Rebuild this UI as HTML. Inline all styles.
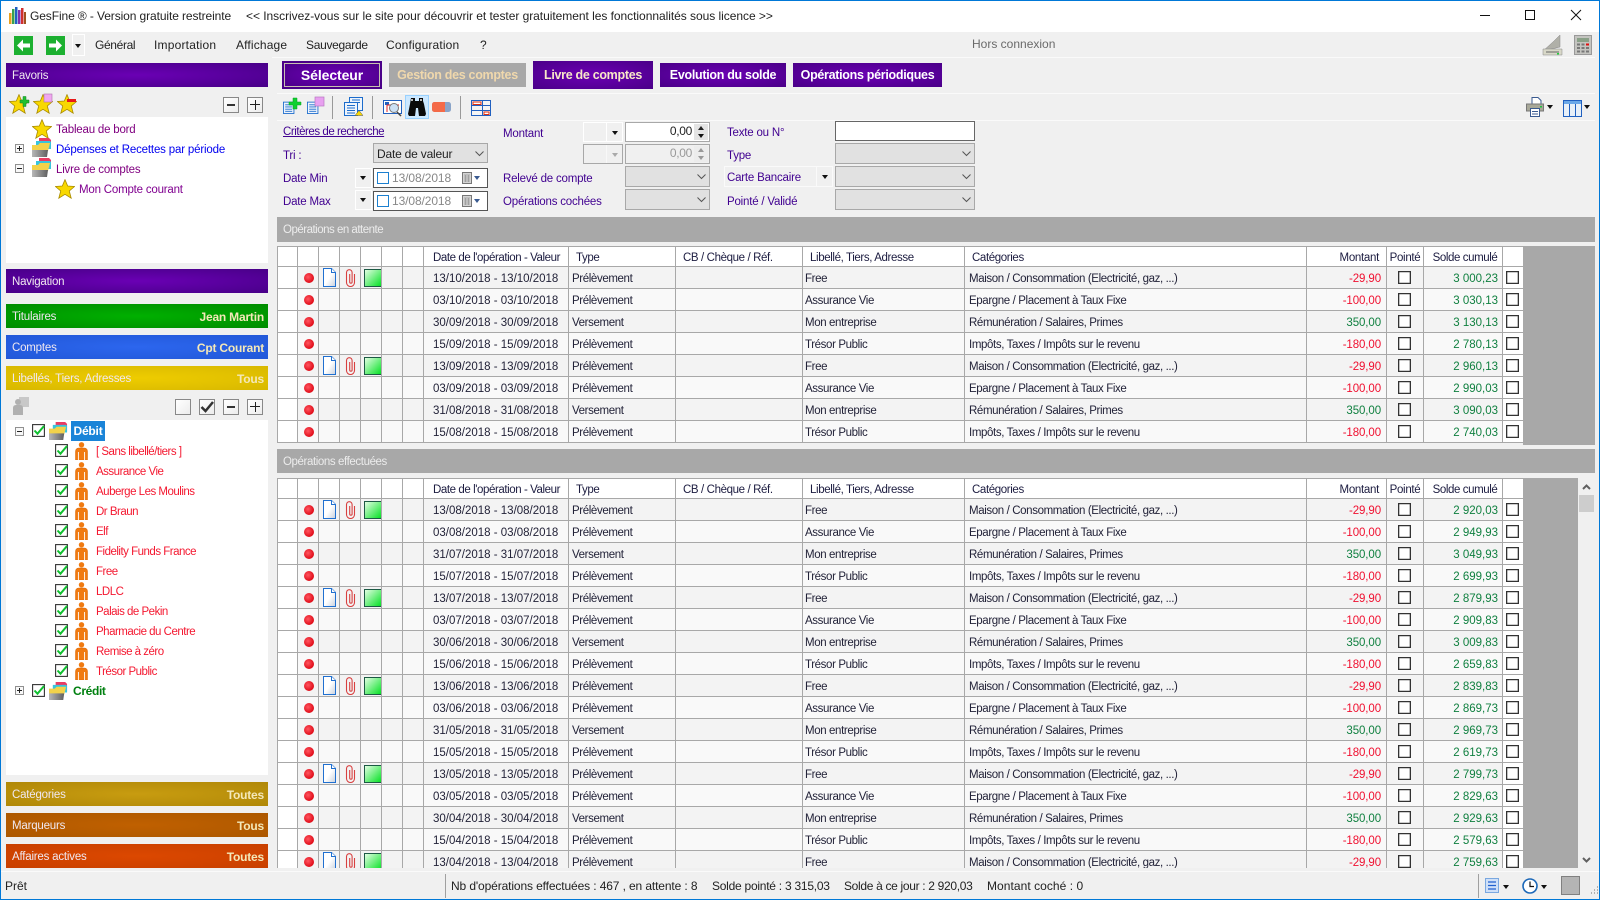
<!DOCTYPE html>
<html lang="fr"><head><meta charset="utf-8"><title>GesFine</title>
<style>
*{box-sizing:border-box}
html,body{margin:0;padding:0}
body{width:1600px;height:900px;overflow:hidden;background:#f0f0f0;font:12px "Liberation Sans",sans-serif;color:#222;position:relative}
.a{position:absolute}
.t{position:absolute;line-height:16px;white-space:nowrap}
svg{display:block;overflow:visible}
.p{color:#400090;font-size:11.5px;letter-spacing:-.2px;margin-top:1px}
.bar{position:absolute;left:6px;width:262px;height:24px;line-height:26px;padding:0 4px 0 6px;color:#f0e8f0;font-size:11.5px;letter-spacing:-.2px;display:flex;justify-content:space-between;overflow:hidden}
.bar b{color:#f4e8b8;font-size:12px;letter-spacing:-.2px}
.btn{position:absolute;color:#fff;font-weight:bold;text-align:center;background:radial-gradient(ellipse at center,#6c00b4,#4a0088);font-size:12.5px;letter-spacing:-.3px;height:24px;line-height:24px;top:63px}
.sel{position:absolute;background:#e1e1e1;border:1px solid #a8a8a8;height:21px}
.chev{position:absolute;right:3px;top:7px}
.dd{position:absolute;background:#f0f0f0;border:1px solid #fff;height:20px}
.tri{position:absolute;width:0;height:0;border-left:3.5px solid transparent;border-right:3.5px solid transparent;border-top:4px solid #111}
.inp{position:absolute;background:#fff;border:1px solid #666}
.mini{position:absolute;width:16px;height:16px;background:linear-gradient(135deg,#fff,#ececec);border:1px solid #888}
.ex{position:absolute;width:9px;height:9px;border:1px solid #909090;background:#f8f8f8}
.ex:before{content:"";position:absolute;left:1px;top:3px;width:5px;height:1px;background:#222}
.ex.pl:after{content:"";position:absolute;left:3px;top:1px;width:1px;height:5px;background:#222}
.tree{position:absolute;left:6px;width:262px;background:#fff}
.lt{position:absolute;line-height:16px;white-space:nowrap;font-size:11.5px;letter-spacing:-.2px}
.rd{color:#f41830;letter-spacing:-.5px}
table{border-collapse:collapse;table-layout:fixed;width:1246px;font-size:11.5px;letter-spacing:-.38px;color:#222238}
td{border:1px solid #a8a8a8;padding:2px 0 0 4px;height:22px;white-space:nowrap;overflow:hidden}
td:nth-child(9){padding-left:3px}
td:nth-child(11){padding-left:2px}
tr.h td{height:20px;background:#fff;padding-left:7px;color:#1c1c40}
tr.o td{background:#f3f3f3}
tr.e td{background:#f9f9f9}
tr td:first-child,tr td:last-child{background:#fff!important}
td.n{padding:0}
td.dt{padding-left:9px;letter-spacing:0}
tr.h td.dt{padding-left:9px;letter-spacing:-.42px}
td.r{text-align:right;padding:2px 5px 0 0;letter-spacing:-.1px}
tr.h td.r{padding-right:7px;letter-spacing:-.3px}
td.m{color:#f01030}
td.g{color:#108040}
td.s{text-align:right;padding:2px 4px 0 0;color:#108040;letter-spacing:0}
td.hc{text-align:center;padding:2px 0 0!important;letter-spacing:-.3px}
tr.h td:nth-child(15){padding-left:4px!important;letter-spacing:-.42px}
i.d{display:block;width:10px;height:10px;border-radius:50%;margin:1px 0 0 6px;background:radial-gradient(circle at 40% 40%,#ff5560,#e00c18 70%)}
b.c{display:block;width:13px;height:13px;border:1px solid #333;background:#fff;margin:auto;position:relative;left:-1px;box-shadow:inset 0 0 0 .3px #333}
.gray{position:absolute;background:#a8a8a8}
.sl{position:absolute;top:872px;font-size:12px;line-height:16px;white-space:nowrap;color:#222}
</style></head>
<body>
<svg width="0" height="0" style="position:absolute">
<defs>
<linearGradient id="gg" x1="0" y1="0" x2="1" y2="1"><stop offset="0" stop-color="#e8ffe8"/><stop offset="1" stop-color="#00e020"/></linearGradient>
<linearGradient id="dg" x1="0" y1="0" x2="1" y2="1"><stop offset=".5" stop-color="#fff"/><stop offset="1" stop-color="#c8d0dc"/></linearGradient>
<linearGradient id="fg" x1="0" y1="0" x2="1" y2="0"><stop offset="0" stop-color="#b8b8b8"/><stop offset="1" stop-color="#606060"/></linearGradient>
<symbol id="star" viewBox="0 0 20 20"><polygon points="10,.6 12.7,7 19.6,7.5 14.3,12 16.2,19.2 10,15.3 3.8,19.2 5.7,12 .4,7.5 7.3,7" fill="#f8d800" stroke="#a88a00" stroke-width=".8"/></symbol>
<symbol id="fold" viewBox="0 0 20 20"><path d="M7 0h10l2 2v8H7z" fill="#e83c62"/><path d="M4 3h14l1 1v7H4z" fill="#38c4dc"/><path d="M0 7h6l2-2h10l-2 8H0z" fill="#f2d24a"/><path d="M0 12h16l-1 7H0z" fill="url(#fg)"/></symbol>
<symbol id="pers" viewBox="0 0 13 18"><circle cx="6.500" cy="2.800" r="2.700" fill="#f07a10"/><path d="M.5 18V9.500Q.5 6 4 6h5q3.500 0 3.500 3.500V18z" fill="#f07a10" stroke="#d86400" stroke-width=".5"/><path d="M3.400 10v8M9.600 10v8" stroke="#fff" stroke-width=".9"/></symbol>
<symbol id="chk" viewBox="0 0 13 13"><rect x=".6" y=".6" width="11.800" height="11.800" fill="#fff" stroke="#333" stroke-width="1.100"/><path d="M2.500 6.500l3 3.200 6.500-7.700" fill="none" stroke="#10c030" stroke-width="2"/></symbol>
<symbol id="doc" viewBox="0 0 13 19"><path d="M.5.500h8l4 4v14H.5z" fill="url(#dg)" stroke="#2070d0"/><path d="M8.500.500v4h4" fill="#fff" stroke="#2070d0"/></symbol>
<symbol id="clip" viewBox="0 0 11 18"><path d="M9.500 5v8.500a4 4 0 0 1-8 0V3.500a2.800 2.800 0 0 1 5.600 0v9.500a1.200 1.200 0 0 1-2.400 0V5" fill="none" stroke="#d84040" stroke-width="1.100"/></symbol>
<symbol id="gr" viewBox="0 0 18 18"><rect x=".5" y=".5" width="17" height="17" fill="url(#gg)" stroke="#1c5a44"/></symbol>
<symbol id="chv" viewBox="0 0 9 6"><path d="M.5.500l4 4 4-4" fill="none" stroke="#555" stroke-width="1"/></symbol>
<symbol id="tdoc" viewBox="0 0 16 17"><rect x=".5" y="3.500" width="12" height="13" fill="#eef4fc" stroke="#1c6ccc"/><path d="M2.500 6.500h8M2.500 9h8M2.500 11.500h8M2.500 14h8" stroke="#1c6ccc"/></symbol>
<symbol id="cal" viewBox="0 0 11 12"><rect x=".5" y=".5" width="9" height="11" fill="#d4d4d4" stroke="#777"/><path d="M2 3h6M2 5h6M2 7h6M2 9h6M3.500 3v7M6.500 3v7" stroke="#999" stroke-width=".8"/></symbol>
</defs></svg>

<!-- window frame -->
<div class="a" style="left:0;top:0;width:1600px;height:32px;background:#fff"></div>
<svg class="a" style="left:9px;top:7px" width="17" height="17"><rect x="0" y="6" width="2.500" height="11" fill="#e9a020"/><rect x="3" y="2" width="2.500" height="15" fill="#38a050"/><rect x="6" y="0" width="2.500" height="17" fill="#2060c0"/><rect x="9" y="3" width="2.500" height="14" fill="#8030b0"/><rect x="12" y="1" width="2.500" height="16" fill="#d03030"/><rect x="15" y="5" width="2" height="12" fill="#a05020"/></svg>
<div class="t" style="left:30px;top:8px;font-size:12px;letter-spacing:-.1px">GesFine ® - Version gratuite restreinte</div>
<div class="t" style="left:246px;top:8px;font-size:12px;letter-spacing:-.04px">&lt;&lt; Inscrivez-vous sur le site pour découvrir et tester gratuitement les fonctionnalités sous licence &gt;&gt;</div>
<svg class="a" style="left:1475px;top:8px" width="115" height="16"><path d="M5 7.500h10" stroke="#111"/><rect x="50.500" y="2.500" width="9" height="9" fill="none" stroke="#111"/><path d="M96 2l10 10M106 2L96 12" stroke="#111"/></svg>

<!-- menu -->
<svg class="a" style="left:14px;top:36px" width="19" height="19"><rect width="19" height="19" fill="#1cb030"/><path d="M3 9.500l6-6v4h7v4H9v4z" fill="#fff"/></svg>
<svg class="a" style="left:46px;top:36px" width="19" height="19"><rect width="19" height="19" fill="#1cb030"/><path d="M16 9.500l-6-6v4H3v4h7v4z" fill="#fff"/></svg>
<div class="a" style="left:72px;top:34px;width:13px;height:22px;border:1px solid #fff"></div>
<div class="tri" style="left:75px;top:44px"></div>
<div class="t" style="left:95px;top:37px;letter-spacing:-.35px">Général</div>
<div class="t" style="left:154px;top:37px;letter-spacing:.2px">Importation</div>
<div class="t" style="left:236px;top:37px;letter-spacing:.15px">Affichage</div>
<div class="t" style="left:306px;top:37px;letter-spacing:-.3px">Sauvegarde</div>
<div class="t" style="left:386px;top:37px;letter-spacing:.15px">Configuration</div>
<div class="t" style="left:480px;top:37px">?</div>
<div class="t" style="left:972px;top:36px;color:#6a6a6a">Hors connexion</div>
<svg class="a" style="left:1542px;top:35px" width="20" height="20"><path d="M1 16L12 6l6-6v12z" fill="#b0b0a8" stroke="#888" stroke-width=".5"/><path d="M1 14h19v6H1z" fill="#d8d8c8" stroke="#888" stroke-width=".5"/><path d="M4 17h13" stroke="#666"/><rect x="15" y="18" width="2" height="1.500" fill="#20d040"/></svg>
<svg class="a" style="left:1574px;top:35px" width="18" height="20"><rect x=".5" y=".5" width="17" height="19" fill="#c4c4c0" stroke="#999"/><rect x="3" y="3" width="12" height="4" fill="#8aa088"/><path d="M3 9.500h3M7.500 9.500h3M3 13h3M7.500 13h3M12 13h3M3 16.500h3M7.500 16.500h3M12 16.500h3" stroke="#777" stroke-width="2"/><path d="M12 9.500h3" stroke="#e01010" stroke-width="2"/></svg>
<div class="a" style="left:272px;top:57px;width:1323px;height:1px;background:#fafafa"></div>

<!-- left panel -->
<div class="bar" style="top:63px;background:radial-gradient(ellipse at center,#6a00b4,#480088)">Favoris</div>
<svg class="a" style="left:9px;top:94px" width="20" height="20"><use href="#star"/><path d="M11 6h3V2.500h3V6h3v3h-3v3.500h-3V9h-3z" fill="#20c030" stroke="#108020" stroke-width=".5"/></svg>
<svg class="a" style="left:33px;top:94px" width="20" height="20"><use href="#star"/><rect x="11" y="0" width="8" height="8" fill="#f0a8f0" stroke="#b070b0" stroke-width=".6"/></svg>
<svg class="a" style="left:57px;top:94px" width="20" height="20"><use href="#star"/><path d="M10 5h9v3h-9z" fill="#e81818"/></svg>
<div class="mini" style="left:223px;top:97px"><div class="a" style="left:3px;top:6px;width:8px;height:2px;background:#333"></div></div>
<div class="mini" style="left:247px;top:97px"><div class="a" style="left:2px;top:6px;width:10px;height:1px;background:#222"></div><div class="a" style="left:6.500px;top:2px;width:1px;height:10px;background:#222"></div></div>
<div class="tree" style="top:117px;height:146px"></div>
<svg class="a" style="left:32px;top:119px" width="20" height="20"><use href="#star"/></svg>
<div class="lt" style="left:56px;top:122px;color:#800080">Tableau de bord</div>
<div class="ex pl" style="left:15px;top:144px"></div>
<svg class="a" style="left:32px;top:138px" width="20" height="20"><use href="#fold"/></svg>
<div class="lt" style="left:56px;top:142px;color:#0000f0;letter-spacing:-.17px">Dépenses et Recettes par période</div>
<div class="ex" style="left:15px;top:164px"></div>
<svg class="a" style="left:32px;top:158px" width="20" height="20"><use href="#fold"/></svg>
<div class="lt" style="left:56px;top:162px;color:#800080">Livre de comptes</div>
<svg class="a" style="left:55px;top:179px" width="20" height="20"><use href="#star"/></svg>
<div class="lt" style="left:79px;top:182px;color:#800090">Mon Compte courant</div>

<div class="bar" style="top:269px;background:radial-gradient(ellipse at center,#6a00b4,#480088)">Navigation</div>
<div class="bar" style="top:304px;background:radial-gradient(ellipse at center,#00b000,#008c00)">Titulaires<b>Jean Martin</b></div>
<div class="bar" style="top:335px;background:radial-gradient(ellipse at center,#2c66ee,#2258d8)">Comptes<b>Cpt Courant</b></div>
<div class="bar" style="top:366px;background:radial-gradient(ellipse at center,#eecc00,#d8b800)">Libellés, Tiers, Adresses<b>Tous</b></div>

<svg class="a" style="left:12px;top:397px" width="17" height="18"><rect x="7" y="0" width="10" height="10" fill="#c8c8c8"/><circle cx="6" cy="5" r="3" fill="#b0b0b0"/><path d="M1 18V11q0-3 3-3h4q3 0 3 3v7z" fill="#b0b0b0"/></svg>
<div class="mini" style="left:175px;top:399px"></div>
<div class="mini" style="left:199px;top:399px"><svg class="a" style="left:0;top:0" width="14" height="14"><path d="M1.500 7l4 4L13 2" fill="none" stroke="#333" stroke-width="2.500"/></svg></div>
<div class="mini" style="left:223px;top:399px"><div class="a" style="left:3px;top:6px;width:8px;height:2px;background:#333"></div></div>
<div class="mini" style="left:247px;top:399px"><div class="a" style="left:2px;top:6px;width:10px;height:1px;background:#222"></div><div class="a" style="left:6.500px;top:2px;width:1px;height:10px;background:#222"></div></div>

<div class="tree" style="top:420px;height:355px"></div>
<div class="ex" style="left:15px;top:427px"></div>
<svg class="a" style="left:32px;top:424px" width="13" height="13"><use href="#chk"/></svg>
<svg class="a" style="left:49px;top:422px" width="19" height="19"><use href="#fold"/></svg>
<div class="a" style="left:71px;top:421px;width:34px;height:20px;background:#1a84d8;color:#fff;font-weight:bold;font-size:12px;line-height:20px;text-align:center;letter-spacing:-.2px">Débit</div>

<svg class="a" style="left:55px;top:444px" width="13" height="13"><use href="#chk"/></svg><svg class="a" style="left:75px;top:442px" width="13" height="18"><use href="#pers"/></svg><div class="lt rd" style="left:96px;top:444px">[ Sans libellé/tiers ]</div>
<svg class="a" style="left:55px;top:464px" width="13" height="13"><use href="#chk"/></svg><svg class="a" style="left:75px;top:462px" width="13" height="18"><use href="#pers"/></svg><div class="lt rd" style="left:96px;top:464px">Assurance Vie</div>
<svg class="a" style="left:55px;top:484px" width="13" height="13"><use href="#chk"/></svg><svg class="a" style="left:75px;top:482px" width="13" height="18"><use href="#pers"/></svg><div class="lt rd" style="left:96px;top:484px">Auberge Les Moulins</div>
<svg class="a" style="left:55px;top:504px" width="13" height="13"><use href="#chk"/></svg><svg class="a" style="left:75px;top:502px" width="13" height="18"><use href="#pers"/></svg><div class="lt rd" style="left:96px;top:504px">Dr Braun</div>
<svg class="a" style="left:55px;top:524px" width="13" height="13"><use href="#chk"/></svg><svg class="a" style="left:75px;top:522px" width="13" height="18"><use href="#pers"/></svg><div class="lt rd" style="left:96px;top:524px">Elf</div>
<svg class="a" style="left:55px;top:544px" width="13" height="13"><use href="#chk"/></svg><svg class="a" style="left:75px;top:542px" width="13" height="18"><use href="#pers"/></svg><div class="lt rd" style="left:96px;top:544px">Fidelity Funds France</div>
<svg class="a" style="left:55px;top:564px" width="13" height="13"><use href="#chk"/></svg><svg class="a" style="left:75px;top:562px" width="13" height="18"><use href="#pers"/></svg><div class="lt rd" style="left:96px;top:564px">Free</div>
<svg class="a" style="left:55px;top:584px" width="13" height="13"><use href="#chk"/></svg><svg class="a" style="left:75px;top:582px" width="13" height="18"><use href="#pers"/></svg><div class="lt rd" style="left:96px;top:584px">LDLC</div>
<svg class="a" style="left:55px;top:604px" width="13" height="13"><use href="#chk"/></svg><svg class="a" style="left:75px;top:602px" width="13" height="18"><use href="#pers"/></svg><div class="lt rd" style="left:96px;top:604px">Palais de Pekin</div>
<svg class="a" style="left:55px;top:624px" width="13" height="13"><use href="#chk"/></svg><svg class="a" style="left:75px;top:622px" width="13" height="18"><use href="#pers"/></svg><div class="lt rd" style="left:96px;top:624px">Pharmacie du Centre</div>
<svg class="a" style="left:55px;top:644px" width="13" height="13"><use href="#chk"/></svg><svg class="a" style="left:75px;top:642px" width="13" height="18"><use href="#pers"/></svg><div class="lt rd" style="left:96px;top:644px">Remise à zéro</div>
<svg class="a" style="left:55px;top:664px" width="13" height="13"><use href="#chk"/></svg><svg class="a" style="left:75px;top:662px" width="13" height="18"><use href="#pers"/></svg><div class="lt rd" style="left:96px;top:664px">Trésor Public</div>
<div class="ex pl" style="left:15px;top:686px"></div>
<svg class="a" style="left:32px;top:684px" width="13" height="13"><use href="#chk"/></svg>
<svg class="a" style="left:49px;top:682px" width="19" height="19"><use href="#fold"/></svg>
<div class="lt" style="left:73px;top:683px;color:#008010;font-weight:bold;font-size:12px;letter-spacing:-.35px">Crédit</div>

<div class="bar" style="top:782px;background:radial-gradient(ellipse at center,#c89c10,#b08808)">Catégories<b>Toutes</b></div>
<div class="bar" style="top:813px;background:radial-gradient(ellipse at center,#c06000,#ac5800)">Marqueurs<b>Tous</b></div>
<div class="bar" style="top:844px;background:radial-gradient(ellipse at center,#dc4800,#c84000)">Affaires actives<b>Toutes</b></div>

<!-- tabs -->
<div class="btn" style="left:282px;top:61px;width:100px;height:28px;line-height:25px;border:2px solid #4a0088;outline:1px solid #c8c0b0;outline-offset:-3px;font-size:14px;letter-spacing:-.1px">Sélecteur</div>
<div class="btn" style="left:389px;width:137px;background:#a8a8a8;color:#f0d8ac">Gestion des comptes</div>
<div class="btn" style="left:533px;top:61px;width:120px;height:28px;line-height:28px;color:#f8e8c8">Livre de comptes</div>
<div class="btn" style="left:660px;width:126px">Evolution du solde</div>
<div class="btn" style="left:793px;width:149px">Opérations périodiques</div>

<!-- toolbar -->
<div class="a" style="left:277px;top:93px;width:1318px;height:1px;background:#fafafa"></div>
<div class="a" style="left:277px;top:120px;width:1318px;height:1px;background:#fafafa"></div>
<svg class="a" style="left:283px;top:97px" width="17" height="18"><use href="#tdoc" y="1" width="14" height="17"/><path d="M6 5h4V1h4v4h4v3h-4v4h-4V8H6z" fill="#10d030" stroke="#08a020" stroke-width=".5"/></svg>
<svg class="a" style="left:307px;top:97px" width="17" height="18"><use href="#tdoc" y="1" width="14" height="17"/><rect x="8" y="0" width="9" height="9" fill="#e8a0f0" stroke="#b878c0" stroke-width=".7"/></svg>
<div class="a" style="left:332px;top:96px;width:1px;height:23px;background:#999"></div>
<svg class="a" style="left:344px;top:97px" width="20" height="19"><rect x="5.500" y=".5" width="13" height="13" fill="#eef4fc" stroke="#1c6ccc"/><path d="M8 3h8M8 5.500h8" stroke="#1c6ccc"/><rect x=".5" y="5.500" width="13" height="13" fill="#eef4fc" stroke="#1c6ccc"/><path d="M3 8.500h8M3 11h8M3 13.500h8M3 16h8" stroke="#1c6ccc"/><path d="M11 18.500l4-5 4 5z" fill="#f8d800" stroke="#555" stroke-width=".5"/></svg>
<div class="a" style="left:372px;top:96px;width:1px;height:23px;background:#999"></div>
<svg class="a" style="left:383px;top:99px" width="20" height="18"><rect x=".5" y="1.500" width="18" height="13" fill="#fff" stroke="#2060c0"/><rect x="2" y="3" width="4" height="3" fill="#2060c0"/><path d="M4 6h12M4 6v7" stroke="#e02020"/><circle cx="11" cy="9" r="4.500" fill="#cce0f4" stroke="#777"/><path d="M14 13l4 4" stroke="#444" stroke-width="1.500"/></svg>
<div class="a" style="left:405px;top:95px;width:24px;height:24px;background:#cce8ff;border:1px solid #99d1ff"></div>
<svg class="a" style="left:408px;top:98px" width="18" height="18"><path d="M3 0h4v3h4V0h4v3l1 3 2 10-1 2h-6l-1-8H8l-1 8H1l-1-2 2-10z" fill="#0a0a0a"/><rect x="3" y="1" width="2" height="2" fill="#bbb"/><rect x="12" y="1" width="2" height="2" fill="#bbb"/></svg>
<svg class="a" style="left:432px;top:101px" width="19" height="12"><rect x="0" y="1" width="19" height="10" rx="2.500" fill="#8aa4c8"/><path d="M2.500 1H13v10H2.500A2.500 2.500 0 0 1 0 8.500v-5A2.500 2.500 0 0 1 2.500 1z" fill="#f46a48"/></svg>
<div class="a" style="left:460px;top:96px;width:1px;height:23px;background:#999"></div>
<svg class="a" style="left:471px;top:100px" width="20" height="16"><rect x=".5" y=".5" width="19" height="15" fill="#f4f4f4" stroke="#2060c0"/><path d="M.5 5.500h19M.5 10.500h19M11.500.5v15" stroke="#2060c0"/><rect x="2" y="2" width="8" height="2.500" fill="#fff" stroke="#e03010"/><rect x="13" y="12" width="5" height="2.500" fill="#fff" stroke="#e03010"/></svg>
<svg class="a" style="left:1526px;top:97px" width="18" height="20"><path d="M6 .5h6l3 3v5H6z" fill="#fff" stroke="#3a5a90"/><rect x=".5" y="7" width="17" height="7" fill="#a8a898" stroke="#777"/><rect x="14" y="9" width="2" height="1.500" fill="#20c040"/><rect x="4.500" y="11.500" width="9" height="8" fill="#fff" stroke="#3a5a90"/><path d="M6 14.500h6M6 17h6" stroke="#3a5a90"/></svg>
<div class="tri" style="left:1547px;top:105px"></div>
<svg class="a" style="left:1563px;top:100px" width="19" height="17"><rect x=".5" y=".5" width="18" height="16" fill="#e8f0f8" stroke="#2060c0"/><rect x="1" y="1" width="17" height="3" fill="#6aa8e8"/><path d="M6.500 4v12M12.500 4v12" stroke="#2060c0"/></svg>
<div class="tri" style="left:1584px;top:105px"></div>

<!-- search form -->
<div class="t p" style="left:283px;top:123px;text-decoration:underline;letter-spacing:-.45px">Critères de recherche</div>
<div class="t p" style="left:283px;top:147px">Tri :</div>
<div class="sel" style="left:373px;top:143px;width:115px;height:20px"><div class="t" style="left:3px;top:2px;letter-spacing:-.2px">Date de valeur</div><svg class="chev" width="9" height="6"><use href="#chv"/></svg></div>
<div class="t p" style="left:283px;top:170px">Date Min</div>
<div class="dd" style="left:355px;top:168px;width:17px"></div><div class="tri" style="left:360px;top:176px"></div>
<div class="inp" style="left:373px;top:168px;width:115px;height:20px;border-color:#555"><div class="a" style="left:3px;top:3px;width:12px;height:12px;border:1px solid #1c80d0;background:#fff"></div><div class="t" style="left:18px;top:1px;color:#888;letter-spacing:-.1px">13/08/2018</div><svg class="a" style="left:88px;top:3px" width="11" height="12"><use href="#cal"/></svg><div class="tri" style="left:100px;top:7px;border-top-color:#3a5a90"></div></div>
<div class="t p" style="left:283px;top:193px">Date Max</div>
<div class="dd" style="left:355px;top:190px;width:17px"></div><div class="tri" style="left:360px;top:198px"></div>
<div class="inp" style="left:373px;top:191px;width:115px;height:20px;border-color:#555"><div class="a" style="left:3px;top:3px;width:12px;height:12px;border:1px solid #1c80d0;background:#fff"></div><div class="t" style="left:18px;top:1px;color:#888;letter-spacing:-.1px">13/08/2018</div><svg class="a" style="left:88px;top:3px" width="11" height="12"><use href="#cal"/></svg><div class="tri" style="left:100px;top:7px;border-top-color:#3a5a90"></div></div>

<div class="t p" style="left:503px;top:125px">Montant</div>
<div class="dd" style="left:583px;top:122px;width:40px"><div class="a" style="left:22px;top:0;width:1px;height:18px;background:#fff"></div></div><div class="tri" style="left:612px;top:131px"></div>
<div class="inp" style="left:625px;top:122px;width:85px;height:20px;border-color:#a8a8a8"><div class="t" style="right:17px;top:0;letter-spacing:-.3px">0,00</div><div class="a" style="right:1px;top:1px;width:14px;height:16px;background:#e4e4e4"><div class="tri" style="left:3.500px;top:2px;border-top:0;border-bottom:4px solid #222"></div><div class="tri" style="left:3.500px;top:10px"></div></div></div>
<div class="dd" style="left:583px;top:144px;width:40px;border-color:#a8a8a8"><div class="a" style="left:22px;top:0;width:1px;height:18px;background:#f8f8f8"></div></div><div class="tri" style="left:612px;top:153px;border-top-color:#aaa"></div>
<div class="inp" style="left:625px;top:144px;width:85px;height:20px;border-color:#a8a8a8;background:#f0f0f0"><div class="t" style="right:17px;top:0;color:#999;letter-spacing:-.3px">0,00</div><div class="a" style="right:1px;top:1px;width:14px;height:16px;background:#ececec"><div class="tri" style="left:3.500px;top:2px;border-top:0;border-bottom:4px solid #999"></div><div class="tri" style="left:3.500px;top:10px;border-top-color:#999"></div></div></div>
<div class="t p" style="left:503px;top:170px">Relevé de compte</div>
<div class="sel" style="left:625px;top:166px;width:85px"><svg class="chev" width="9" height="6"><use href="#chv"/></svg></div>
<div class="t p" style="left:503px;top:193px">Opérations cochées</div>
<div class="sel" style="left:625px;top:189px;width:85px"><svg class="chev" width="9" height="6"><use href="#chv"/></svg></div>

<div class="t p" style="left:727px;top:124px">Texte ou N°</div>
<div class="inp" style="left:835px;top:121px;width:140px;height:20px"></div>
<div class="t p" style="left:727px;top:147px">Type</div>
<div class="sel" style="left:835px;top:143px;width:140px"><svg class="chev" width="9" height="6"><use href="#chv"/></svg></div>
<div class="a" style="left:724px;top:166px;width:93px;height:21px;border:1px solid #fafafa"></div>
<div class="a" style="left:817px;top:166px;width:16px;height:21px;border:1px solid #fafafa;border-left:0"></div>
<div class="t p" style="left:727px;top:169px">Carte Bancaire</div>
<div class="tri" style="left:822px;top:175px"></div>
<div class="sel" style="left:835px;top:166px;width:140px"><svg class="chev" width="9" height="6"><use href="#chv"/></svg></div>
<div class="t p" style="left:727px;top:193px">Pointé / Validé</div>
<div class="sel" style="left:835px;top:189px;width:140px"><svg class="chev" width="9" height="6"><use href="#chv"/></svg></div>

<!-- section 1 -->
<div class="gray" style="left:277px;top:217px;width:1318px;height:25px"></div>
<div class="t" style="left:283px;top:222px;color:#ececec;font-size:11.5px;letter-spacing:-.5px">Opérations en attente</div>
<div class="gray" style="left:1523px;top:246px;width:72px;height:199px"></div>
<div class="a" style="left:277px;top:246px;width:1247px;height:197px;overflow:hidden">
<table>
<colgroup><col style="width:20px"><col style="width:21px"><col style="width:21px"><col style="width:21px"><col style="width:21px"><col style="width:21px"><col style="width:21px"><col style="width:145px"><col style="width:107px"><col style="width:127px"><col style="width:162px"><col style="width:342px"><col style="width:80px"><col style="width:37px"><col style="width:79px"><col style="width:21px"></colgroup>
<tr class="h"><td></td><td></td><td></td><td></td><td></td><td></td><td></td><td class="dt">Date de l'opération - Valeur</td><td>Type</td><td>CB / Chèque / Réf.</td><td>Libellé, Tiers, Adresse</td><td>Catégories</td><td class="r">Montant</td><td class="hc">Pointé</td><td class="hc">Solde cumulé</td><td></td></tr>
<tr class="o"><td></td><td class="n"><i class="d"></i></td><td class="n"><svg style="margin-left:4px" width="13" height="19"><use href="#doc"/></svg></td><td class="n"><svg style="margin-left:5px" width="11" height="18"><use href="#clip"/></svg></td><td class="n"><svg style="margin-left:3px" width="18" height="18"><use href="#gr"/></svg></td><td></td><td></td><td class="dt">13/10/2018 - 13/10/2018</td><td>Prélèvement</td><td></td><td>Free</td><td>Maison / Consommation (Electricité, gaz, ...)</td><td class="r m">-29,90</td><td class="n"><b class="c"></b></td><td class="s">3 000,23</td><td class="n"><b class="c"></b></td></tr>
<tr class="e"><td></td><td class="n"><i class="d"></i></td><td></td><td></td><td></td><td></td><td></td><td class="dt">03/10/2018 - 03/10/2018</td><td>Prélèvement</td><td></td><td>Assurance Vie</td><td>Epargne / Placement à Taux Fixe</td><td class="r m">-100,00</td><td class="n"><b class="c"></b></td><td class="s">3 030,13</td><td class="n"><b class="c"></b></td></tr>
<tr class="o"><td></td><td class="n"><i class="d"></i></td><td></td><td></td><td></td><td></td><td></td><td class="dt">30/09/2018 - 30/09/2018</td><td>Versement</td><td></td><td>Mon entreprise</td><td>Rémunération / Salaires, Primes</td><td class="r g">350,00</td><td class="n"><b class="c"></b></td><td class="s">3 130,13</td><td class="n"><b class="c"></b></td></tr>
<tr class="e"><td></td><td class="n"><i class="d"></i></td><td></td><td></td><td></td><td></td><td></td><td class="dt">15/09/2018 - 15/09/2018</td><td>Prélèvement</td><td></td><td>Trésor Public</td><td>Impôts, Taxes / Impôts sur le revenu</td><td class="r m">-180,00</td><td class="n"><b class="c"></b></td><td class="s">2 780,13</td><td class="n"><b class="c"></b></td></tr>
<tr class="o"><td></td><td class="n"><i class="d"></i></td><td class="n"><svg style="margin-left:4px" width="13" height="19"><use href="#doc"/></svg></td><td class="n"><svg style="margin-left:5px" width="11" height="18"><use href="#clip"/></svg></td><td class="n"><svg style="margin-left:3px" width="18" height="18"><use href="#gr"/></svg></td><td></td><td></td><td class="dt">13/09/2018 - 13/09/2018</td><td>Prélèvement</td><td></td><td>Free</td><td>Maison / Consommation (Electricité, gaz, ...)</td><td class="r m">-29,90</td><td class="n"><b class="c"></b></td><td class="s">2 960,13</td><td class="n"><b class="c"></b></td></tr>
<tr class="e"><td></td><td class="n"><i class="d"></i></td><td></td><td></td><td></td><td></td><td></td><td class="dt">03/09/2018 - 03/09/2018</td><td>Prélèvement</td><td></td><td>Assurance Vie</td><td>Epargne / Placement à Taux Fixe</td><td class="r m">-100,00</td><td class="n"><b class="c"></b></td><td class="s">2 990,03</td><td class="n"><b class="c"></b></td></tr>
<tr class="o"><td></td><td class="n"><i class="d"></i></td><td></td><td></td><td></td><td></td><td></td><td class="dt">31/08/2018 - 31/08/2018</td><td>Versement</td><td></td><td>Mon entreprise</td><td>Rémunération / Salaires, Primes</td><td class="r g">350,00</td><td class="n"><b class="c"></b></td><td class="s">3 090,03</td><td class="n"><b class="c"></b></td></tr>
<tr class="e"><td></td><td class="n"><i class="d"></i></td><td></td><td></td><td></td><td></td><td></td><td class="dt">15/08/2018 - 15/08/2018</td><td>Prélèvement</td><td></td><td>Trésor Public</td><td>Impôts, Taxes / Impôts sur le revenu</td><td class="r m">-180,00</td><td class="n"><b class="c"></b></td><td class="s">2 740,03</td><td class="n"><b class="c"></b></td></tr>
</table></div>

<!-- section 2 -->
<div class="gray" style="left:277px;top:449px;width:1318px;height:24px"></div>
<div class="t" style="left:283px;top:454px;color:#ececec;font-size:11.5px;letter-spacing:-.4px">Opérations effectuées</div>
<div class="gray" style="left:1523px;top:478px;width:55px;height:390px"></div>
<div class="a" style="left:277px;top:478px;width:1247px;height:390px;overflow:hidden">
<table>
<colgroup><col style="width:20px"><col style="width:21px"><col style="width:21px"><col style="width:21px"><col style="width:21px"><col style="width:21px"><col style="width:21px"><col style="width:145px"><col style="width:107px"><col style="width:127px"><col style="width:162px"><col style="width:342px"><col style="width:80px"><col style="width:37px"><col style="width:79px"><col style="width:21px"></colgroup>
<tr class="h"><td></td><td></td><td></td><td></td><td></td><td></td><td></td><td class="dt">Date de l'opération - Valeur</td><td>Type</td><td>CB / Chèque / Réf.</td><td>Libellé, Tiers, Adresse</td><td>Catégories</td><td class="r">Montant</td><td class="hc">Pointé</td><td class="hc">Solde cumulé</td><td></td></tr>
<tr class="o"><td></td><td class="n"><i class="d"></i></td><td class="n"><svg style="margin-left:4px" width="13" height="19"><use href="#doc"/></svg></td><td class="n"><svg style="margin-left:5px" width="11" height="18"><use href="#clip"/></svg></td><td class="n"><svg style="margin-left:3px" width="18" height="18"><use href="#gr"/></svg></td><td></td><td></td><td class="dt">13/08/2018 - 13/08/2018</td><td>Prélèvement</td><td></td><td>Free</td><td>Maison / Consommation (Electricité, gaz, ...)</td><td class="r m">-29,90</td><td class="n"><b class="c"></b></td><td class="s">2 920,03</td><td class="n"><b class="c"></b></td></tr>
<tr class="e"><td></td><td class="n"><i class="d"></i></td><td></td><td></td><td></td><td></td><td></td><td class="dt">03/08/2018 - 03/08/2018</td><td>Prélèvement</td><td></td><td>Assurance Vie</td><td>Epargne / Placement à Taux Fixe</td><td class="r m">-100,00</td><td class="n"><b class="c"></b></td><td class="s">2 949,93</td><td class="n"><b class="c"></b></td></tr>
<tr class="o"><td></td><td class="n"><i class="d"></i></td><td></td><td></td><td></td><td></td><td></td><td class="dt">31/07/2018 - 31/07/2018</td><td>Versement</td><td></td><td>Mon entreprise</td><td>Rémunération / Salaires, Primes</td><td class="r g">350,00</td><td class="n"><b class="c"></b></td><td class="s">3 049,93</td><td class="n"><b class="c"></b></td></tr>
<tr class="e"><td></td><td class="n"><i class="d"></i></td><td></td><td></td><td></td><td></td><td></td><td class="dt">15/07/2018 - 15/07/2018</td><td>Prélèvement</td><td></td><td>Trésor Public</td><td>Impôts, Taxes / Impôts sur le revenu</td><td class="r m">-180,00</td><td class="n"><b class="c"></b></td><td class="s">2 699,93</td><td class="n"><b class="c"></b></td></tr>
<tr class="o"><td></td><td class="n"><i class="d"></i></td><td class="n"><svg style="margin-left:4px" width="13" height="19"><use href="#doc"/></svg></td><td class="n"><svg style="margin-left:5px" width="11" height="18"><use href="#clip"/></svg></td><td class="n"><svg style="margin-left:3px" width="18" height="18"><use href="#gr"/></svg></td><td></td><td></td><td class="dt">13/07/2018 - 13/07/2018</td><td>Prélèvement</td><td></td><td>Free</td><td>Maison / Consommation (Electricité, gaz, ...)</td><td class="r m">-29,90</td><td class="n"><b class="c"></b></td><td class="s">2 879,93</td><td class="n"><b class="c"></b></td></tr>
<tr class="e"><td></td><td class="n"><i class="d"></i></td><td></td><td></td><td></td><td></td><td></td><td class="dt">03/07/2018 - 03/07/2018</td><td>Prélèvement</td><td></td><td>Assurance Vie</td><td>Epargne / Placement à Taux Fixe</td><td class="r m">-100,00</td><td class="n"><b class="c"></b></td><td class="s">2 909,83</td><td class="n"><b class="c"></b></td></tr>
<tr class="o"><td></td><td class="n"><i class="d"></i></td><td></td><td></td><td></td><td></td><td></td><td class="dt">30/06/2018 - 30/06/2018</td><td>Versement</td><td></td><td>Mon entreprise</td><td>Rémunération / Salaires, Primes</td><td class="r g">350,00</td><td class="n"><b class="c"></b></td><td class="s">3 009,83</td><td class="n"><b class="c"></b></td></tr>
<tr class="e"><td></td><td class="n"><i class="d"></i></td><td></td><td></td><td></td><td></td><td></td><td class="dt">15/06/2018 - 15/06/2018</td><td>Prélèvement</td><td></td><td>Trésor Public</td><td>Impôts, Taxes / Impôts sur le revenu</td><td class="r m">-180,00</td><td class="n"><b class="c"></b></td><td class="s">2 659,83</td><td class="n"><b class="c"></b></td></tr>
<tr class="o"><td></td><td class="n"><i class="d"></i></td><td class="n"><svg style="margin-left:4px" width="13" height="19"><use href="#doc"/></svg></td><td class="n"><svg style="margin-left:5px" width="11" height="18"><use href="#clip"/></svg></td><td class="n"><svg style="margin-left:3px" width="18" height="18"><use href="#gr"/></svg></td><td></td><td></td><td class="dt">13/06/2018 - 13/06/2018</td><td>Prélèvement</td><td></td><td>Free</td><td>Maison / Consommation (Electricité, gaz, ...)</td><td class="r m">-29,90</td><td class="n"><b class="c"></b></td><td class="s">2 839,83</td><td class="n"><b class="c"></b></td></tr>
<tr class="e"><td></td><td class="n"><i class="d"></i></td><td></td><td></td><td></td><td></td><td></td><td class="dt">03/06/2018 - 03/06/2018</td><td>Prélèvement</td><td></td><td>Assurance Vie</td><td>Epargne / Placement à Taux Fixe</td><td class="r m">-100,00</td><td class="n"><b class="c"></b></td><td class="s">2 869,73</td><td class="n"><b class="c"></b></td></tr>
<tr class="o"><td></td><td class="n"><i class="d"></i></td><td></td><td></td><td></td><td></td><td></td><td class="dt">31/05/2018 - 31/05/2018</td><td>Versement</td><td></td><td>Mon entreprise</td><td>Rémunération / Salaires, Primes</td><td class="r g">350,00</td><td class="n"><b class="c"></b></td><td class="s">2 969,73</td><td class="n"><b class="c"></b></td></tr>
<tr class="e"><td></td><td class="n"><i class="d"></i></td><td></td><td></td><td></td><td></td><td></td><td class="dt">15/05/2018 - 15/05/2018</td><td>Prélèvement</td><td></td><td>Trésor Public</td><td>Impôts, Taxes / Impôts sur le revenu</td><td class="r m">-180,00</td><td class="n"><b class="c"></b></td><td class="s">2 619,73</td><td class="n"><b class="c"></b></td></tr>
<tr class="o"><td></td><td class="n"><i class="d"></i></td><td class="n"><svg style="margin-left:4px" width="13" height="19"><use href="#doc"/></svg></td><td class="n"><svg style="margin-left:5px" width="11" height="18"><use href="#clip"/></svg></td><td class="n"><svg style="margin-left:3px" width="18" height="18"><use href="#gr"/></svg></td><td></td><td></td><td class="dt">13/05/2018 - 13/05/2018</td><td>Prélèvement</td><td></td><td>Free</td><td>Maison / Consommation (Electricité, gaz, ...)</td><td class="r m">-29,90</td><td class="n"><b class="c"></b></td><td class="s">2 799,73</td><td class="n"><b class="c"></b></td></tr>
<tr class="e"><td></td><td class="n"><i class="d"></i></td><td></td><td></td><td></td><td></td><td></td><td class="dt">03/05/2018 - 03/05/2018</td><td>Prélèvement</td><td></td><td>Assurance Vie</td><td>Epargne / Placement à Taux Fixe</td><td class="r m">-100,00</td><td class="n"><b class="c"></b></td><td class="s">2 829,63</td><td class="n"><b class="c"></b></td></tr>
<tr class="o"><td></td><td class="n"><i class="d"></i></td><td></td><td></td><td></td><td></td><td></td><td class="dt">30/04/2018 - 30/04/2018</td><td>Versement</td><td></td><td>Mon entreprise</td><td>Rémunération / Salaires, Primes</td><td class="r g">350,00</td><td class="n"><b class="c"></b></td><td class="s">2 929,63</td><td class="n"><b class="c"></b></td></tr>
<tr class="e"><td></td><td class="n"><i class="d"></i></td><td></td><td></td><td></td><td></td><td></td><td class="dt">15/04/2018 - 15/04/2018</td><td>Prélèvement</td><td></td><td>Trésor Public</td><td>Impôts, Taxes / Impôts sur le revenu</td><td class="r m">-180,00</td><td class="n"><b class="c"></b></td><td class="s">2 579,63</td><td class="n"><b class="c"></b></td></tr>
<tr class="o"><td></td><td class="n"><i class="d"></i></td><td class="n"><svg style="margin-left:4px" width="13" height="19"><use href="#doc"/></svg></td><td class="n"><svg style="margin-left:5px" width="11" height="18"><use href="#clip"/></svg></td><td class="n"><svg style="margin-left:3px" width="18" height="18"><use href="#gr"/></svg></td><td></td><td></td><td class="dt">13/04/2018 - 13/04/2018</td><td>Prélèvement</td><td></td><td>Free</td><td>Maison / Consommation (Electricité, gaz, ...)</td><td class="r m">-29,90</td><td class="n"><b class="c"></b></td><td class="s">2 759,63</td><td class="n"><b class="c"></b></td></tr>
</table></div>

<!-- scrollbar -->
<svg class="a" style="left:1582px;top:484px" width="9" height="6"><path d="M1 5l3.500-3.500L8 5" fill="none" stroke="#606060" stroke-width="2"/></svg>
<div class="a" style="left:1579px;top:495px;width:15px;height:17px;background:#cdcdcd"></div>
<svg class="a" style="left:1582px;top:857px" width="9" height="6"><path d="M1 1l3.500 3.500L8 1" fill="none" stroke="#606060" stroke-width="2"/></svg>

<!-- status bar -->
<div class="a" style="left:0;top:871px;width:1600px;height:1px;background:#fafafa"></div>
<div class="sl" style="left:5px;top:878px">Prêt</div>
<div class="a" style="left:445px;top:874px;width:1px;height:24px;background:#a0a0a0"></div>
<div class="sl" style="left:451px;top:878px;letter-spacing:-.12px">Nb d'opérations effectuées : 467 , en attente : 8</div>
<div class="sl" style="left:712px;top:878px;letter-spacing:-.25px">Solde pointé : 3 315,03</div>
<div class="sl" style="left:844px;top:878px;letter-spacing:-.32px">Solde à ce jour : 2 920,03</div>
<div class="sl" style="left:987px;top:878px;letter-spacing:.05px">Montant coché : 0</div>
<div class="a" style="left:1478px;top:874px;width:1px;height:24px;background:#a0a0a0"></div>
<svg class="a" style="left:1485px;top:878px" width="14" height="15"><rect x=".5" y=".5" width="13" height="14" fill="#cfe0f8" stroke="#7aa8e0"/><path d="M3 4h8M3 7.500h8M3 11h8" stroke="#2060d0" stroke-width="1.300"/></svg>
<div class="tri" style="left:1503px;top:885px"></div>
<svg class="a" style="left:1522px;top:878px" width="16" height="16"><circle cx="8" cy="8" r="7" fill="#fff" stroke="#1c68b8" stroke-width="1.600"/><path d="M8 3.500V8.500H12" fill="none" stroke="#111" stroke-width="1.200"/></svg>
<div class="tri" style="left:1541px;top:885px"></div>
<div class="a" style="left:1561px;top:876px;width:19px;height:19px;background:#b4b4b4;border:1px solid #808080"></div>
<svg class="a" style="left:1589px;top:886px" width="10" height="10"><path d="M8 1h1M5 4h1M8 4h1M2 7h1M5 7h1M8 7h1" stroke="#b0b0b0" stroke-width="2"/></svg>

<!-- window border -->
<div class="a" style="left:0;top:0;width:1600px;height:1px;background:#0078d7"></div>
<div class="a" style="left:0;top:0;width:1px;height:900px;background:#0078d7"></div>
<div class="a" style="left:1599px;top:0;width:1px;height:900px;background:#0078d7"></div>
<div class="a" style="left:0;top:899px;width:1600px;height:1px;background:#0078d7"></div>
</body></html>
